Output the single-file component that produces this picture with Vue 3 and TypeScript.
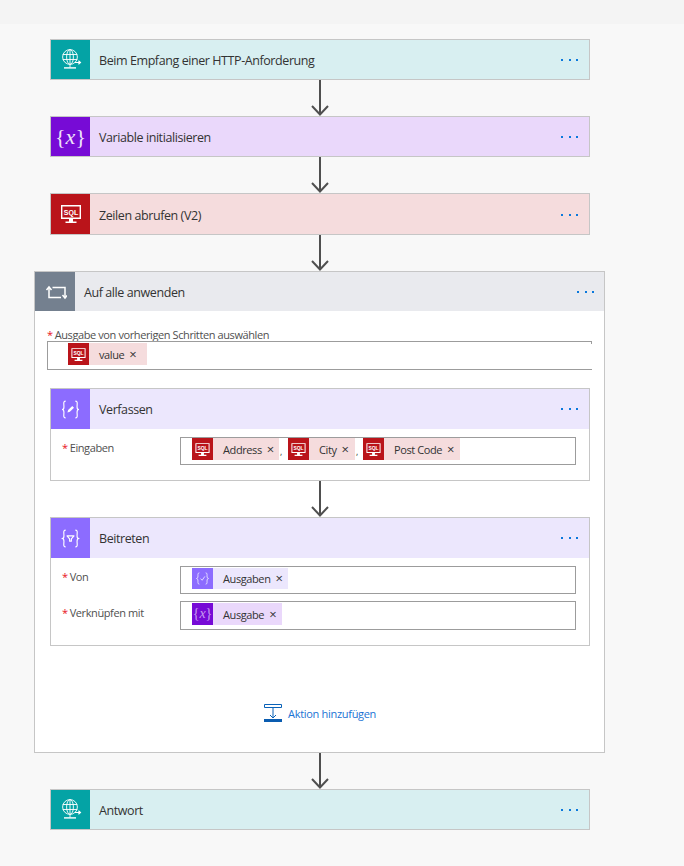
<script setup lang="ts">
type Tone = 'sql' | 'variable' | 'compose'
interface Chip {
  label: string
  tone: Tone
  width: number
}

const address: Chip[] = [
  { label: 'Address', tone: 'sql', width: 87 },
  { label: 'City', tone: 'sql', width: 67 },
  { label: 'Post Code', tone: 'sql', width: 97 },
]
const value: Chip = { label: 'value', tone: 'sql', width: 79 }
const ausgaben: Chip = { label: 'Ausgaben', tone: 'compose', width: 96 }
const ausgabe: Chip = { label: 'Ausgabe', tone: 'variable', width: 90 }
</script>

<template>
  <div class="page">
    <svg class="sprite" aria-hidden="true">
      <symbol id="i-globe" viewBox="0 0 24 24">
        <g fill="none" stroke="#fff" stroke-width=".9">
          <circle cx="11" cy="9" r="7.4" />
          <ellipse cx="11" cy="9" rx="3.4" ry="7.4" />
          <path d="M3.8 6.5h14.400M3.800 11.500h14.400M11 1.600v14.800M11 16.400v3" />
          <path d="M16 14.500h5M19.400 12.800l2 1.700-2 1.700" stroke-width="1.200" />
        </g>
        <path d="M5 19.200h12v1.400H5z" fill="#fff" />
      </symbol>
      <symbol id="i-screen" viewBox="0 0 24 24">
        <path fill="#fff" fill-rule="evenodd" d="M2 3h20v14H2zM3.400 4.400v11.200h17.200V4.400zM10 17h4v2.400h3.500V21h-11v-1.600H10z" />
      </symbol>
      <symbol id="i-pencil" viewBox="0 0 24 24">
        <g fill="none" stroke="#fff" stroke-width="1.300" stroke-linecap="round">
          <path d="M6 2.500C3.500 2.500 4.500 6 4.500 9c0 2-1 3-2.200 3 1.200 0 2.200 1 2.200 3 0 3-1 6.500 1.500 6.500" />
          <path d="M18 2.500c2.500 0 1.500 3.500 1.500 6.500 0 2 1 3 2.200 3-1.200 0-2.200 1-2.200 3 0 3 1 6.500-1.500 6.500" />
        </g>
        <path d="M8.500 15.500l.8-2.800 4.700-4.700 2 2-4.700 4.700z" fill="#fff" />
      </symbol>
      <symbol id="i-filter" viewBox="0 0 24 24">
        <g fill="none" stroke="#fff" stroke-width="1.300" stroke-linecap="round" stroke-linejoin="round">
          <path d="M6 2.500C3.500 2.500 4.500 6 4.500 9c0 2-1 3-2.200 3 1.200 0 2.200 1 2.200 3 0 3-1 6.500 1.500 6.500" />
          <path d="M18 2.500c2.500 0 1.500 3.500 1.500 6.500 0 2 1 3 2.200 3-1.200 0-2.200 1-2.200 3 0 3 1 6.500-1.500 6.500" />
          <path d="M8 9h8l-3 3.500V15h-2v-2.500z" />
        </g>
      </symbol>
      <symbol id="i-check" viewBox="0 0 24 24">
        <g fill="none" stroke="#fff" stroke-width="1.300" stroke-linecap="round" opacity=".8">
          <path d="M7 4C4.500 4 6 8 5.500 10c-.3 1.300-1 2-2 2 1 0 1.700.7 2 2C6 16 4.500 20 7 20" />
          <path d="M17 4c2.500 0 1 4 1.500 6 .3 1.300 1 2 2 2-1 0-1.700.7-2 2-.5 2 1 6-1.500 6" />
          <path d="M9.500 12.500l2 2 3.500-5" />
        </g>
      </symbol>
      <symbol id="i-loop" viewBox="0 0 24 24">
        <g fill="none" stroke="#fff" stroke-width="1.500">
          <path d="M6 7.500V17.500H18M9.500 7.500H22V17.500" />
          <path d="M3.500 10L6 7l2.500 3M19.500 15l2.500 3 2-2.500" />
        </g>
      </symbol>
      <symbol id="i-arrow" viewBox="0 0 20 36">
        <path d="M10 0v34.500M2 26l8 8.500 8-8.500" fill="none" stroke="#4f4f4f" stroke-width="2" />
      </symbol>
    </svg>

    <div class="band"></div>

    <main class="flow">
      <section class="card teal">
        <header class="head">
          <span class="glyph"><svg class="ico"><use href="#i-globe" /></svg></span>
          <span class="title">Beim Empfang einer HTTP-Anforderung</span>
          <span class="dots"><i></i><i></i><i></i></span>
        </header>
      </section>
      <svg class="arrow"><use href="#i-arrow" /></svg>

      <section class="card violet">
        <header class="head">
          <span class="glyph">
            <svg class="ico wide" viewBox="0 0 33 28">
              <text x="16.500" y="21" text-anchor="middle" class="var-text">{<tspan class="var-x">x</tspan>}</text>
            </svg>
          </span>
          <span class="title">Variable initialisieren</span>
          <span class="dots"><i></i><i></i><i></i></span>
        </header>
      </section>
      <svg class="arrow"><use href="#i-arrow" /></svg>

      <section class="card red tall">
        <header class="head">
          <span class="glyph">
            <svg class="ico" viewBox="0 0 24 24">
              <use href="#i-screen" width="24" height="24" />
              <text x="12" y="12.600" text-anchor="middle" class="sql-text">SQL</text>
            </svg>
          </span>
          <span class="title">Zeilen abrufen (V2)</span>
          <span class="dots"><i></i><i></i><i></i></span>
        </header>
      </section>
      <svg class="arrow"><use href="#i-arrow" /></svg>

      <section class="loop">
        <header class="head loop-head">
          <span class="glyph"><svg class="ico"><use href="#i-loop" /></svg></span>
          <span class="title">Auf alle anwenden</span>
          <span class="dots"><i></i><i></i><i></i></span>
        </header>

        <div class="loop-body">
          <div class="picker">
            <label class="label"><b>*</b>Ausgabe von vorherigen Schritten auswählen</label>
            <div class="field open">
              <span class="chip" :class="value.tone" :style="{ width: value.width + 'px' }">
                <span class="chip-ico">
                  <svg viewBox="0 0 24 24">
                    <use href="#i-screen" width="24" height="24" />
                    <text x="12" y="12.600" text-anchor="middle" class="sql-text">SQL</text>
                  </svg>
                </span>
                <span class="chip-text">{{ value.label }}</span>
                <span class="chip-x">×</span>
              </span>
            </div>
          </div>

          <section class="card compose inner">
            <header class="head">
              <span class="glyph"><svg class="ico"><use href="#i-pencil" /></svg></span>
              <span class="title">Verfassen</span>
              <span class="dots"><i></i><i></i><i></i></span>
            </header>
            <div class="rows">
              <div class="row">
                <label class="label"><b>*</b>Eingaben</label>
                <div class="field tokens">
                  <template v-for="(c, i) in address" :key="c.label">
                    <span v-if="i" class="comma" :class="{ tight: i > 1 }">,</span>
                    <span class="chip" :class="c.tone" :style="{ width: c.width + 'px' }">
                      <span class="chip-ico">
                        <svg viewBox="0 0 24 24">
                          <use href="#i-screen" width="24" height="24" />
                          <text x="12" y="12.600" text-anchor="middle" class="sql-text">SQL</text>
                        </svg>
                      </span>
                      <span class="chip-text">{{ c.label }}</span>
                      <span class="chip-x">×</span>
                    </span>
                  </template>
                </div>
              </div>
            </div>
          </section>
          <svg class="arrow"><use href="#i-arrow" /></svg>

          <section class="card compose inner">
            <header class="head">
              <span class="glyph"><svg class="ico"><use href="#i-filter" /></svg></span>
              <span class="title">Beitreten</span>
              <span class="dots"><i></i><i></i><i></i></span>
            </header>
            <div class="rows">
              <div class="row">
                <label class="label"><b>*</b>Von</label>
                <div class="field tokens pad">
                  <span class="chip short" :class="ausgaben.tone" :style="{ width: ausgaben.width + 'px' }">
                    <span class="chip-ico"><svg><use href="#i-check" /></svg></span>
                    <span class="chip-text">{{ ausgaben.label }}</span>
                    <span class="chip-x">×</span>
                  </span>
                </div>
              </div>
              <div class="row">
                <label class="label"><b>*</b>Verknüpfen mit</label>
                <div class="field tokens pad high">
                  <span class="chip" :class="ausgabe.tone" :style="{ width: ausgabe.width + 'px' }">
                    <span class="chip-ico">
                      <svg class="var-small" viewBox="0 0 33 28">
                        <text x="16.500" y="21" text-anchor="middle" class="var-text dim">{<tspan class="var-x">x</tspan>}</text>
                      </svg>
                    </span>
                    <span class="chip-text">{{ ausgabe.label }}</span>
                    <span class="chip-x">×</span>
                  </span>
                </div>
              </div>
            </div>
          </section>

          <a class="add">
            <svg width="18" height="18" viewBox="0 0 18 18">
              <path d="M.5.500h17v3H.5z" fill="none" stroke="#0a62b8" />
              <path d="M9 4v9.500M6 11l3 3 3-3" fill="none" stroke="#0a62b8" />
              <path d="M0 15h18v3H0z" fill="#0a5cb0" />
            </svg>
            <span>Aktion hinzufügen</span>
          </a>
        </div>
      </section>
      <svg class="arrow"><use href="#i-arrow" /></svg>

      <section class="card teal">
        <header class="head">
          <span class="glyph"><svg class="ico"><use href="#i-globe" /></svg></span>
          <span class="title">Antwort</span>
          <span class="dots"><i></i><i></i><i></i></span>
        </header>
      </section>
    </main>
  </div>
</template>

<style>
html,
body {
  margin: 0;
  background: #f8f8f8;
}
</style>

<style scoped>
.page {
  min-height: 866px;
  background: #f8f8f8;
  font-family: "Open Sans", "Noto Sans", sans-serif;
  font-size: 12.5px;
  letter-spacing: -0.42px;
  color: #333;
  overflow: hidden;
}

.sprite {
  position: absolute;
  width: 0;
  height: 0;
}

.sql-text {
  font: 700 7px "Liberation Sans", sans-serif;
  letter-spacing: 0;
  fill: #fff;
}

.var-text {
  font: 22px "Liberation Serif", serif;
  letter-spacing: 0;
  fill: #efe4fa;
}

.var-text.dim {
  fill: #c79cf0;
}

.var-x {
  font-style: italic;
}

.band {
  height: 24px;
  background: #f4f4f4;
}

.flow {
  width: 540px;
  margin-left: 50px;
  padding-top: 15px;
  display: flex;
  flex-direction: column;
}

.arrow {
  display: block;
  width: 20px;
  height: 36px;
  margin-left: 260px;
  flex: none;
}

.card {
  box-sizing: border-box;
  height: 41px;
  border: 1px solid #c6c6c6;
  background: #fff;
}

.card.tall {
  height: 42px;
}

.card.inner {
  height: auto;
}

.head {
  display: flex;
  align-items: center;
  height: 39px;
}

.card.tall .head {
  height: 40px;
}

.glyph {
  width: 39px;
  height: 100%;
  flex: none;
  display: flex;
  align-items: center;
  justify-content: center;
}

.ico {
  width: 24px;
  height: 24px;
}

.ico.wide {
  width: 33px;
  height: 28px;
}

.title {
  margin-left: 9px;
  padding-top: 2px;
  flex: 1;
}

.dots {
  display: flex;
  gap: 5.5px;
  margin: 1px 11px 0 0;
}

.dots i {
  width: 2px;
  height: 2px;
  background: #0a78dc;
}

.teal .head {
  background: #d8eff1;
}

.teal .glyph {
  background: #04a3a5;
}

.violet .head {
  background: #ead8fb;
}

.violet .glyph {
  background: #770bd6;
}

.red .head {
  background: #f5dcdd;
}

.red .glyph {
  background: #ba141a;
}

.compose .head {
  background: #ece7fd;
  height: 40px;
}

.compose .glyph {
  background: #8c6cff;
}

.compose .ico {
  width: 21px;
  height: 21px;
}

.compose .title,
.compose .dots {
  padding-top: 0;
  margin-top: 0;
}

.loop {
  box-sizing: border-box;
  width: 571px;
  height: 482px;
  margin-left: -16px;
  flex: none;
  border: 1px solid #c6c6c6;
  background: #fff;
}

.loop-head {
  background: #e9eaee;
}

.loop-head .glyph {
  width: 40px;
  background: #74808f;
}

.loop-head .dots {
  margin-right: 10px;
}

.loop-body {
  padding: 0 14px 0 15px;
}

.picker {
  margin-left: -3px;
  padding-top: 16px;
  margin-bottom: 18px;
}

.label {
  display: block;
  height: 14px;
  color: #505050;
  font-size: 11px;
  letter-spacing: -0.4px;
  line-height: 16px;
}

.label b {
  color: #e81123;
  font-weight: 400;
  margin-right: 2px;
}

.field {
  box-sizing: border-box;
  border: 1px solid #9c9c9c;
  background: #fff;
  display: flex;
  align-items: flex-start;
}

.field.open {
  position: relative;
  width: 545px;
  height: 29px;
  padding: 1px 0 0 20px;
  border-right: 0;
}

.field.open::after {
  content: "";
  position: absolute;
  top: 0;
  right: 0;
  width: 1px;
  height: 2px;
  background: #9c9c9c;
}

.tokens {
  width: 396px;
  height: 28px;
  padding: 0 0 0 11px;
}

.tokens.pad {
  padding-top: 1px;
}

.tokens.high {
  height: 29px;
}

.rows {
  padding: 8px 13px 15px 0;
  display: flex;
  flex-direction: column;
  gap: 7px;
}

.row {
  display: flex;
  justify-content: space-between;
}

.row .label {
  margin: 3px 0 0 11px;
}

.row + .row .label {
  margin-top: 4px;
}

.chip {
  display: flex;
  align-items: center;
  height: 22px;
  flex: none;
}

.chip.short {
  height: 21px;
}

.chip.sql {
  background: #f5dcdd;
}

.chip.variable {
  background: #ead8fb;
}

.chip.compose {
  background: #ece7fd;
}

.chip-ico {
  width: 21px;
  height: 100%;
  display: flex;
  align-items: center;
  justify-content: center;
  flex: none;
}

.chip-ico svg {
  width: 17px;
  height: 17px;
}

.chip-ico svg.var-small {
  width: 21px;
  height: 18px;
}

.chip.sql .chip-ico {
  background: #ba141a;
}

.chip.variable .chip-ico {
  background: #770bd6;
}

.chip.compose .chip-ico {
  background: #8c6cff;
}

.chip-text {
  margin-left: 10px;
  font-size: 11px;
  letter-spacing: -0.4px;
  white-space: nowrap;
}

.chip-x {
  margin-left: 5px;
  font-size: 13px;
  line-height: 1;
  color: #333;
}

.comma {
  width: 9px;
  flex: none;
  padding-left: 1px;
  box-sizing: border-box;
  font-size: 9px;
  line-height: 28px;
}

.comma.tight {
  width: 8px;
}

.add {
  display: flex;
  align-items: center;
  gap: 6px;
  margin: 58px 0 0 214px;
  color: #1a73d4;
  font-size: 11px;
  letter-spacing: -0.3px;
}
</style>
